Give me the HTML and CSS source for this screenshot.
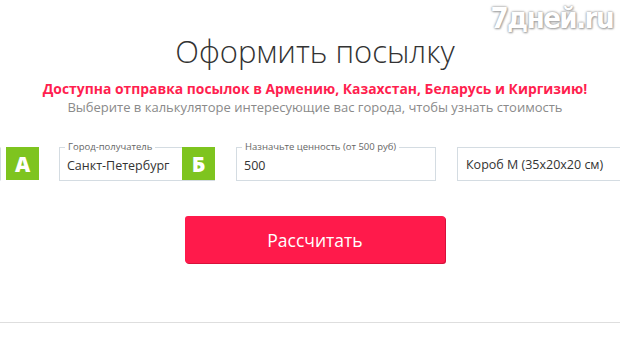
FILE: index.html
```html
<!DOCTYPE html>
<html lang="ru">
<head>
<meta charset="utf-8">
<link rel="stylesheet" href="styles.css">
</head>
<body>
<div class="page">
  <div class="watermark">7дней.ru</div>
  <div class="center">
    <h1 class="title">Оформить посылку</h1>
    <p class="promo">Доступна отправка посылок в Армению, Казахстан, Беларусь и Киргизию!</p>
    <p class="hint">Выберите в калькуляторе интересующие вас города, чтобы узнать стоимость</p>
  </div>
  <div class="fields">
    <div class="field field-from">
      <span class="badge">А</span>
    </div>
    <div class="field field-to">
      <span class="legend">Город-получатель</span>
      <span class="value">Санкт-Петербург</span>
      <span class="badge">Б</span>
    </div>
    <div class="field field-price">
      <span class="legend">Назначьте ценность (от 500 руб)</span>
      <span class="value">500</span>
    </div>
    <div class="field field-box">
      <span class="value">Короб М (35х20х20 см)</span>
    </div>
  </div>
  <div class="center actions">
    <button class="calc">Рассчитать</button>
  </div>
  <div class="divider"></div>
</div>
</body>
</html>
```

FILE: styles.css
```css
html, body {
  margin: 0;
  padding: 0;
  background: #fff;
}
body {
  font-family: "Open Sans", "Noto Sans", sans-serif;
  width: 620px;
  height: 347px;
  overflow: hidden;
}
.page {
  position: relative;
  width: 620px;
  padding-top: 31px;
}
.watermark {
  position: absolute;
  top: 1px;
  right: 7px;
  font-family: "DejaVu Sans Condensed", "DejaVu Sans", sans-serif;
  font-weight: bold;
  font-size: 29px;
  letter-spacing: -1.5px;
  color: #fff;
  text-shadow: 0 0 2px #9a9a9a, 0 0 3px #b0b0b0, 1px 1px 2px #aaa;
}
.center {
  padding-left: 10px;
  display: flex;
  flex-direction: column;
  align-items: center;
}
.title {
  margin: 0;
  font-weight: 300;
  font-size: 31px;
  line-height: 40px;
  color: #333;
}
.promo {
  margin: 8px 0 0;
  font-weight: bold;
  font-size: 13.9px;
  line-height: 19px;
  color: #ff1f4f;
}
.hint {
  margin: 0;
  font-size: 13px;
  line-height: 19px;
  color: #8a8a8a;
}
.fields {
  margin-top: 30px;
  display: flex;
  gap: 21px;
}
.field {
  position: relative;
  flex: none;
  box-sizing: border-box;
  height: 34px;
  border: 1px solid #d4dce2;
  display: flex;
  align-items: center;
}
.field-from {
  width: 38px;
  border-top-color: transparent;
  border-bottom-color: transparent;
  border-right: none;
}
.field-to { width: 156px; }
.field-price { width: 200px; }
.field-box { width: 163px; border-right: none; }
.legend {
  position: absolute;
  top: -8px;
  left: 5px;
  padding: 0 3px;
  background: #fff;
  font-size: 9.5px;
  line-height: 14px;
  color: #666;
  white-space: nowrap;
}
.value {
  padding-left: 7px;
  padding-top: 2px;
  font-size: 12.5px;
  color: #333;
  white-space: nowrap;
}
.field-box .value { padding-left: 8px; padding-top: 0; }
.badge {
  position: absolute;
  top: -1px;
  right: -1px;
  width: 33px;
  height: 33px;
  background: #7ec41f;
  color: #fff;
  font-weight: 800;
  font-size: 21px;
  display: flex;
  align-items: center;
  justify-content: center;
}
.actions {
  margin-top: 35px;
}
.calc {
  width: 260px;
  height: 47px;
  border: none;
  border-radius: 3px;
  background: #ff1a4b;
  box-shadow: 1px 1px 0 #d8103b;
  color: #fff;
  font-family: "Open Sans", "Noto Sans", sans-serif;
  font-size: 17.5px;
  padding: 0;
}
.divider {
  margin-top: 59px;
  height: 1px;
  background: #dedede;
}
```
